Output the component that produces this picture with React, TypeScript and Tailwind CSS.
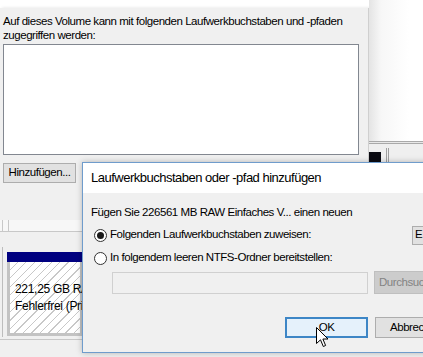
import React from "react";

function Radio({ checked }: { checked?: boolean }) {
  return (
    <span className="flex h-[13px] w-[13px] shrink-0 items-center justify-center rounded-full border border-[#333333] bg-white">
      {checked && <span className="h-[7px] w-[7px] rounded-full bg-[#1a1a1a]" />}
    </span>
  );
}

function Cursor() {
  return (
    <svg width="14" height="21" viewBox="0 0 14 21" className="absolute left-[316px] top-[327px]">
      <path
        d="M0.5 0.5 L0.5 16.5 L4.5 12.8 L7.3 19.5 L9.6 18.5 L6.9 12 L12 12 Z"
        fill="white"
        stroke="black"
        strokeWidth="1"
        strokeLinejoin="miter"
      />
    </svg>
  );
}

export default function App() {
  return (
    <div className="relative h-[357px] w-[423px] overflow-hidden bg-[#f0f0f0] font-['Liberation_Sans',Arial,sans-serif] text-[11.5px] tracking-[-0.45px] text-black">
      <div className="flex h-full">
        {/* properties window (left) */}
        <div className="flex w-[369px] shrink-0 flex-col">
          <div className="h-[8px] bg-white" />
          <div className="flex flex-col border-r border-[#cfcfcf] bg-[#f0f0f0] pl-[3px] shadow-[2px_0_3px_rgba(0,0,0,0.12)]">
            <p className="mt-[6px] leading-[14px]">
              Auf dieses Volume kann mit folgenden Laufwerkbuchstaben und -pfaden
              <br />
              zugegriffen werden:
            </p>
            <div className="mt-[2px] h-[111px] w-[356px] border border-[#828790] bg-white" />
            <div className="mt-[8px] flex h-[20px] w-[73px] items-center justify-center border border-[#adadad] bg-[#e1e1e1]">
              Hinzufügen...
            </div>
            <div className="h-[37px]" />
          </div>

          {/* disk management behind */}
          <div className="flex flex-1 flex-col">
            <div className="flex h-[12px] border-b border-[#c8c8c8] bg-[#f7f7f7]">
              <div className="ml-[2px] w-[7px] border-l border-r border-[#c8c8c8]" />
            </div>
            <div className="ml-[2px] mt-[15px] flex h-[90px] flex-col border-l border-[#bdbdbd] pl-[4px] pt-[5px]">
              <div className="h-[10px] w-[76px] bg-[#000080]" />
              <div className="flex h-[74px] w-[76px] flex-col justify-center border-[3px] border-t-0 border-[#c3c3c3] bg-[repeating-linear-gradient(135deg,#ffffff_0px,#ffffff_5px,#c8c8c8_5px,#c8c8c8_6px)] pl-[5px] text-[12px] tracking-[-0.3px] leading-[17px]">
                <span className="whitespace-nowrap">221,25 GB RAW</span>
                <span className="whitespace-nowrap">Fehlerfrei (Primäre Partition)</span>
              </div>
            </div>
            <div className="mt-[2px] border-t border-[#c8c8c8]" />
          </div>
        </div>

        {/* right side window behind */}
        <div className="flex flex-1 flex-col">
          <div className="h-[141px] bg-[linear-gradient(90deg,#e4e4e4_0px,#f7f7f7_12px,#ffffff_40px)]" />
          <div className="h-[3px] border-t border-b border-[#a9a9a9] bg-[#e8e8e8]" />
          <div className="flex h-[18px] items-end bg-[#efefef]">
            <div className="h-[10px] w-[12px] bg-[#0b0b12]" />
            <div className="ml-[5px] h-[14px] w-[3px] border-l border-r border-[#a0a0a0]" />
          </div>
          <div className="flex-1 bg-[#f0f0f0]" />
        </div>
      </div>

      {/* add drive letter dialog */}
      <div className="absolute left-[82px] top-[162px] flex h-[191px] w-[400px] flex-col border border-[#6f9ccc] bg-[#f0f0f0] shadow-[0_0_6px_rgba(0,0,0,0.25)]">
        <div className="flex h-[30px] shrink-0 items-center bg-white pl-[8px] text-[13px] tracking-[-0.5px]">
          Laufwerkbuchstaben oder -pfad hinzufügen
        </div>
        <div className="flex flex-col pl-[8px]">
          <p className="mt-[12px] leading-[14px]">Fügen Sie 226561 MB RAW Einfaches V... einen neuen</p>
          <div className="mt-[6px] flex h-[20px] items-center">
            <span className="ml-[3px] shrink-0">
              <Radio checked />
            </span>
            <span className="ml-[3px] w-[302px] shrink-0">Folgenden Laufwerkbuchstaben zuweisen:</span>
            <div className="flex h-[19px] w-[44px] shrink-0 items-center border border-[#adadad] bg-[#e1e1e1] pl-[2px]">
              E
            </div>
          </div>
          <div className="mt-[3px] flex h-[20px] items-center">
            <span className="ml-[3px] shrink-0">
              <Radio />
            </span>
            <span className="ml-[3px]">In folgendem leeren NTFS-Ordner bereitstellen:</span>
          </div>
          <div className="mt-[3px] flex items-center">
            <div className="ml-[21px] h-[22px] w-[256px] shrink-0 border border-[#d0d0d0] bg-[#f0f0f0]" />
            <div className="ml-[6px] flex h-[23px] w-[80px] shrink-0 items-center border border-[#bfbfbf] bg-[#cccccc] pl-[4px] text-[#838383]">
              Durchsuchen...
            </div>
          </div>
          <div className="mt-[23px] flex items-center">
            <div className="ml-[194px] flex h-[21px] w-[83px] shrink-0 items-center justify-center border-2 border-[#3d86c6] bg-[#e5f1fb]">
              OK
            </div>
            <div className="ml-[7px] flex h-[21px] w-[80px] shrink-0 items-center border border-[#adadad] bg-[#e1e1e1] pl-[14px]">
              Abbrechen
            </div>
          </div>
        </div>
      </div>

      <Cursor />
    </div>
  );
}
